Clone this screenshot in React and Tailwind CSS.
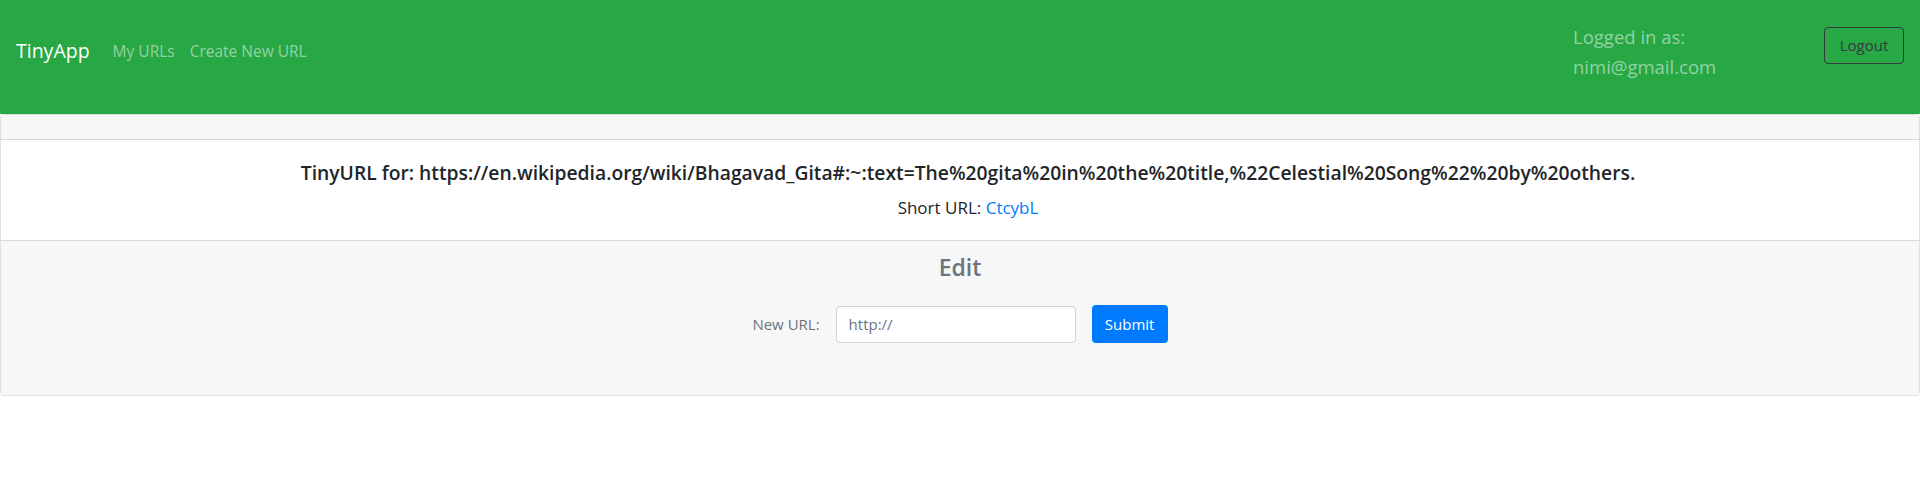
export default function App() {
  return (
    <div className="min-h-screen bg-white font-['Open_Sans',sans-serif] text-[#212529]">
      {/* Navbar */}
      <nav className="flex h-[114px] items-start bg-[#28a745] px-4">
        <a className="mt-[36px] text-[19.5px] leading-[30px] text-white">TinyApp</a>
        <div className="ml-[23px] mt-[39px] flex gap-[15px] text-[15.5px] leading-[24px] text-[#93d3a2]">
          <a>My URLs</a>
          <a>Create New URL</a>
        </div>

        <div className="ml-auto flex items-start">
          <div className="mt-[22px] w-[251px] text-[18.5px] leading-[30px] text-[#93d3a2]">
            <div>Logged in as:</div>
            <div>nimi@gmail.com</div>
          </div>
          <button className="mt-[27px] h-[37px] w-[80px] rounded border border-[#343a40] text-[15px] text-[#343a40]">
            Logout
          </button>
        </div>
      </nav>

      {/* Card */}
      <div className="overflow-hidden rounded border border-black/[0.125]">
        <div className="h-[25px] border-b border-black/[0.125] bg-[#f7f7f7]" />

        <div className="h-[100px] bg-white pl-[16px] pt-[19px] text-center">
          <h5 className="text-[19.3px] font-semibold leading-[28px]">
            TinyURL for: https://en.wikipedia.org/wiki/Bhagavad_Gita#:~:text=The%20gita%20in%20the%20title,%22Celestial%20Song%22%20by%20others.
          </h5>
          <p className="mt-[10px] text-[17px] leading-[22px]">
            Short URL: <a className="text-[#007bff]">CtcybL</a>
          </p>
        </div>

        <div className="h-[155px] border-t border-black/[0.125] bg-[#f7f7f7] pt-[11px] text-center">
          <h4 className="text-[23px] font-semibold leading-[30px] text-[#6c757d]">Edit</h4>
          <form className="mt-[23px] flex items-center justify-center">
            <label className="text-[15px] text-[#6c757d]">New URL:</label>
            <input
              type="text"
              placeholder="http://"
              className="ml-[16px] h-[37px] w-[240px] rounded border border-[#ced4da] bg-white px-3 text-[15px] text-[#495057] placeholder:text-[#6c757d]"
            />
            <button
              type="button"
              className="ml-[16px] h-[38px] w-[76px] rounded bg-[#007bff] text-[15px] text-white"
            >
              Submit
            </button>
          </form>
        </div>
      </div>
    </div>
  );
}
